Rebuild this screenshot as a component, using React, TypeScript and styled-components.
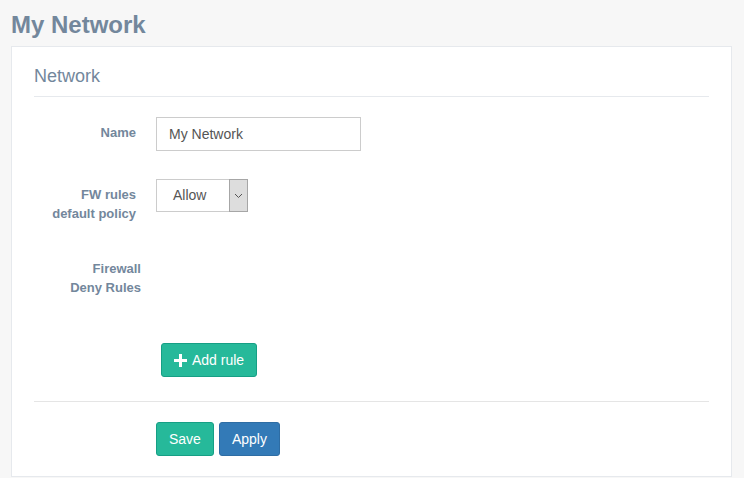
import styled, { createGlobalStyle } from 'styled-components';

const GlobalStyle = createGlobalStyle`
    html, body {
        margin: 0;
        padding: 0;
        background: #f7f7f7;
        font-family: 'Liberation Sans', Arial, sans-serif;
        color: #73879c;
    }
`;

const PlusIcon = () => (
    <svg width="13" height="13" viewBox="0 0 13 13">
        <path d="M5 0h3v5h5v3H8v5H5V8H0V5h5z" fill="#fff" />
    </svg>
);

const App = () => {
    return (
        <Page>
            <GlobalStyle />
            <PageTitle>My Network</PageTitle>
            <Panel>
                <PanelTitle>Network</PanelTitle>
                <Form>
                    <FormRow gap={28}>
                        <Label>Name</Label>
                        <TextInput defaultValue="My Network" />
                    </FormRow>
                    <FormRow gap={30}>
                        <Label>
                            FW rules
                            <br />
                            default policy
                        </Label>
                        <SelectBox>
                            <SelectValue>Allow</SelectValue>
                            <SelectArrow>
                                <svg width="9" height="6" viewBox="0 0 9 6">
                                    <path
                                        d="M1 1l3.5 3.5L8 1"
                                        fill="none"
                                        stroke="#555"
                                        strokeWidth="1"
                                    />
                                </svg>
                            </SelectArrow>
                        </SelectBox>
                    </FormRow>
                    <FormRow gap={46}>
                        <Label wide>
                            Firewall
                            <br />
                            Deny Rules
                        </Label>
                    </FormRow>
                    <ActionRow>
                        <Button variant="success">
                            <PlusIcon />
                            Add rule
                        </Button>
                    </ActionRow>
                </Form>
                <Divider />
                <FooterRow>
                    <Button variant="success">Save</Button>
                    <Button variant="primary">Apply</Button>
                </FooterRow>
            </Panel>
        </Page>
    );
};

const Page = styled.div`
    padding: 12px 12px 0 11px;
    height: 478px;
    box-sizing: border-box;
`;

const PageTitle = styled.h3`
    margin: 0 0 8px;
    font-size: 24px;
    line-height: 26px;
    font-weight: bold;
    color: #73879c;
`;

const Panel = styled.div`
    background: #fff;
    border: 1px solid #e6e9ed;
    padding: 17px 22px 20px;
`;

const PanelTitle = styled.h2`
    margin: 0;
    padding-bottom: 8px;
    font-size: 18px;
    line-height: 24px;
    font-weight: normal;
    border-bottom: 1px solid #e6e9ed;
`;

const Form = styled.div`
    padding-top: 20px;
`;

const FormRow = styled.div<{ gap: number }>`
    display: flex;
    align-items: flex-start;
    margin-bottom: ${(p) => p.gap}px;
`;

const Label = styled.label<{ wide?: boolean }>`
    flex: none;
    width: ${(p) => (p.wide ? 107 : 102)}px;
    margin-right: ${(p) => (p.wide ? 15 : 20)}px;
    padding-top: 6px;
    text-align: right;
    font-size: 13px;
    line-height: 19px;
    font-weight: bold;
    color: #73879c;
`;

const TextInput = styled.input`
    width: 205px;
    height: 34px;
    box-sizing: border-box;
    padding: 6px 12px;
    border: 1px solid #ccc;
    border-radius: 0;
    font-family: inherit;
    font-size: 14px;
    color: #555;
    outline: none;
`;

const SelectBox = styled.div`
    display: flex;
    width: 92px;
    height: 33px;
    box-sizing: border-box;
    border: 1px solid #ccc;
    background: #fff;
`;

const SelectValue = styled.span`
    flex: 1;
    padding-left: 16px;
    font-size: 14px;
    line-height: 31px;
    color: #555;
`;

const SelectArrow = styled.span`
    width: 17px;
    margin: -1px -1px -1px 0;
    background: #dddddd;
    border: 1px solid #a6a6a6;
    display: flex;
    align-items: center;
    justify-content: center;
`;

const ActionRow = styled.div`
    padding-left: 127px;
`;

const Button = styled.button<{ variant: 'success' | 'primary' }>`
    display: inline-flex;
    align-items: center;
    gap: 5px;
    height: 34px;
    box-sizing: border-box;
    margin: 0 5px 0 0;
    padding: 6px 12px;
    border-radius: 3px;
    border: 1px solid ${(p) => (p.variant === 'success' ? '#169f85' : '#2e6da4')};
    background: ${(p) => (p.variant === 'success' ? '#26b99a' : '#337ab7')};
    color: #fff;
    font-family: inherit;
    font-size: 14px;
    line-height: 20px;
    cursor: pointer;
`;

const Divider = styled.div`
    height: 1px;
    background: #e5e5e5;
    margin: 24px 0 20px;
`;

const FooterRow = styled.div`
    display: flex;
    padding-left: 122px;
`;

export default App;
